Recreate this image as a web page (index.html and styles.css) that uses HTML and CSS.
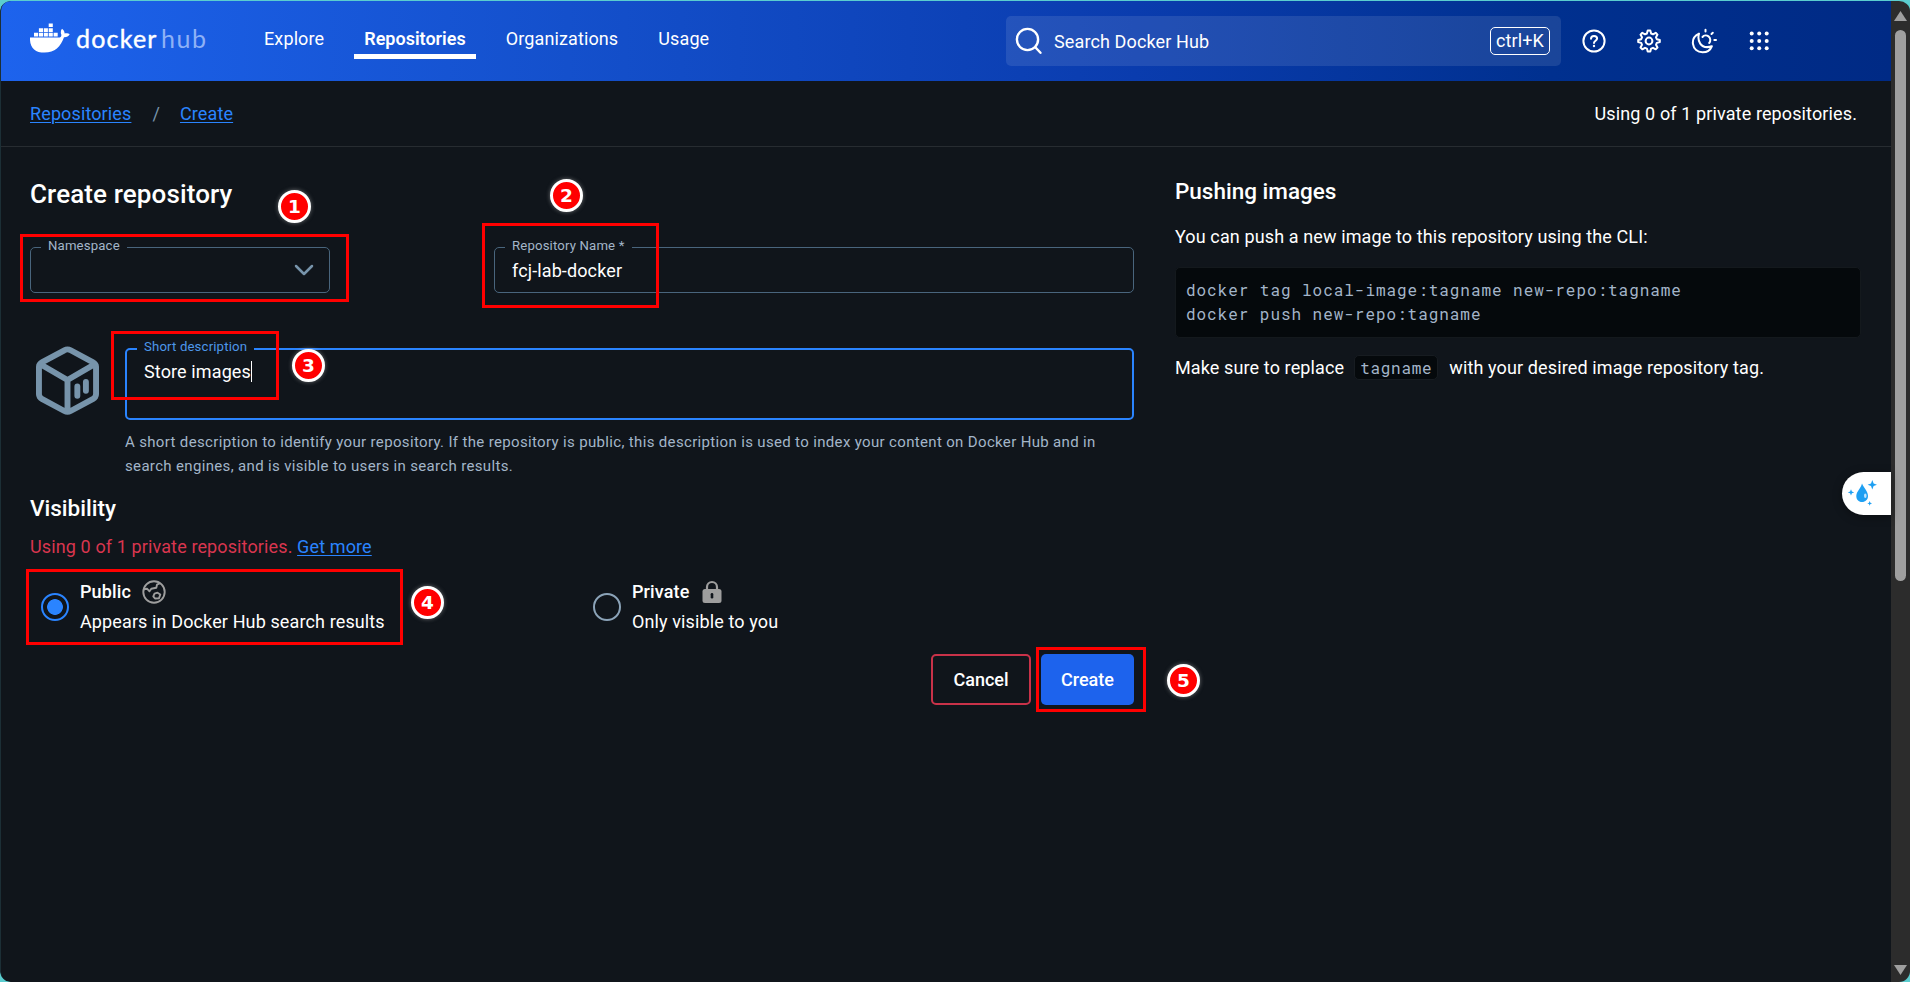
FILE: index.html
```html
<!DOCTYPE html>
<html lang="en">
<head>
<meta charset="utf-8">
<title>Create repository | Docker Hub</title>
<link rel="stylesheet" href="styles.css">
</head>
<body>
<div class="window">
  <div class="page">
    <header class="topbar">
      <div class="logo">
        <svg class="whale" viewBox="0 0 40 30" fill="#fff">
          <path d="M0 14.5H28.5C30.5 14.5 31.6 13.6 31.3 11.5C30.4 9.6 30.8 7.3 32 5.8C33.6 6.9 34.6 8.4 34.6 10.4C36.6 10 38.6 10.4 39.7 11.3C38.7 13.4 36.5 14.3 34 14.2C30.8 23.4 24.8 29.6 14.5 29.6C5 29.6-.5 24.5 0 14.5Z"/>
          <path d="M4 9.8h4.1v3.7H4zM8.9 9.8H13v3.7H8.9zM13.8 9.8h4.1v3.7h-4.1zM18.7 9.8h4.1v3.7h-4.1zM23.6 9.8h4.1v3.7h-4.1zM8.9 5.2H13v3.7H8.9zM13.8 5.2h4.1v3.7h-4.1zM18.7 5.2h4.1v3.7h-4.1zM18.7.4h4.1v3.7h-4.1z"/>
        </svg>
        <span class="logo-docker">docker</span><span class="logo-hub">hub</span>
      </div>
      <nav class="nav">
        <a class="nav-item">Explore</a>
        <a class="nav-item active">Repositories</a>
        <a class="nav-item">Organizations</a>
        <a class="nav-item">Usage</a>
      </nav>
      <div class="search">
        <svg class="search-icon" viewBox="0 0 28 28" fill="none" stroke="#fff" stroke-width="2.4" stroke-linecap="round"><circle cx="12.5" cy="12.5" r="10.6"/><path d="M20.3 20.3L25.5 25.8"/></svg>
        <span class="search-text">Search Docker Hub</span>
        <kbd class="kbd">ctrl+K</kbd>
      </div>
      <div class="tools">
        <svg viewBox="0 0 26 26" fill="none" stroke="#fff" stroke-width="2" stroke-linecap="round"><circle cx="13" cy="13" r="10.6"/><path d="M10 10.7C10 9 11.3 7.9 13 7.9S16.1 9 16.1 10.6C16.1 12.6 13 12.8 13 14.9"/><circle cx="13" cy="18" r=".5" stroke-width="1.4"/></svg>
        <svg viewBox="0 0 26 26" fill="none" stroke="#fff" stroke-width="2" stroke-linejoin="round"><circle cx="13" cy="13" r="3.4"/><path d="M11.7 2.5h2.6l.8 3 1.9.8 2.7-1.5 1.8 1.8-1.5 2.7.8 1.9 3 .8v2.1l-3 .8-.8 1.9 1.5 2.7-1.8 1.8-2.7-1.5-1.9.8-.8 3h-2.6l-.8-3-1.9-.8-2.7 1.5-1.8-1.8L6 16.8l-.8-1.9-3-.8V12l3-.8L6 9.3 4.5 6.6l1.8-1.8L9 6.3l1.9-.8z"/></svg>
        <svg viewBox="0 0 26 26" fill="none" stroke="#fff" stroke-width="2" stroke-linecap="round" stroke-linejoin="round"><path d="M8 5.6C3.8 7.600 1.3 11.500 2 16C2.7 21 6.5 24.200 11.5 24.200C16 24.200 19.5 21.700 20.8 18.300C16 19.800 11.5 19 9.200 15.600C7.200 12.500 7 9 8 5.600Z"/><path d="M11.5 9C13 7.300 15.600 7 17.500 8.400C19.600 10 19.900 13 18.200 15M14.500 1.800v1.700M21.800 4.700l-1.300 1.300M23.300 12h1.700"/></svg>
        <svg viewBox="0 0 26 26" fill="#fff"><circle cx="5.700" cy="5.600" r="2"/><circle cx="13.200" cy="5.600" r="2"/><circle cx="20.700" cy="5.600" r="2"/><circle cx="5.700" cy="13" r="2"/><circle cx="13.200" cy="13" r="2"/><circle cx="20.700" cy="13" r="2"/><circle cx="5.700" cy="20.300" r="2"/><circle cx="13.200" cy="20.300" r="2"/><circle cx="20.700" cy="20.300" r="2"/></svg>
      </div>
    </header>

    <div class="crumbs">
      <a class="link">Repositories</a><span class="slash">/</span><a class="link">Create</a>
      <span class="quota">Using 0 of 1 private repositories.</span>
    </div>

    <main class="content">
      <section class="form">
        <h1 class="title">Create repository</h1>
        <div class="row">
          <fieldset class="field namespace">
            <legend>Namespace</legend>
            <svg class="chevron" viewBox="0 0 20 12" fill="none" stroke="#7794ab" stroke-width="2.5" stroke-linecap="round" stroke-linejoin="round"><path d="M2 2l8 8 8-8"/></svg>
          </fieldset>
          <fieldset class="field reponame">
            <legend>Repository Name *</legend>
            <div class="value">fcj-lab-docker</div>
          </fieldset>
        </div>
        <div class="desc">
          <svg class="cube" viewBox="0 0 64 70" fill="none" stroke="#7794ab" stroke-width="6" stroke-linejoin="round"><path d="M28.8 4.3Q32 2.5 35.2 4.3L57.6 16.3Q61 18.2 61 21V49Q61 52 57.6 54L35.2 66Q32 67.7 28.8 66L6.4 54Q3 52 3 49V21Q3 18.2 6.4 16.3ZM4.5 18.5L32 34.5L59.5 18.5M32 34.5V66"/><path stroke-linecap="round" d="M42 41V50.5M50.7 36.5V45.5"/></svg>
          <div class="desc-body">
            <fieldset class="field focus">
              <legend>Short description</legend>
              <div class="value"><span>Store images</span><i class="caret"></i></div>
            </fieldset>
            <p class="helper">A short description to identify your repository. If the repository is public, this description is used to index your content on Docker Hub and in<br>search engines, and is visible to users in search results.</p>
          </div>
        </div>
        <h2 class="subtitle">Visibility</h2>
        <p class="limit">Using 0 of 1 private repositories. <a class="link">Get more</a></p>
        <div class="options">
          <div class="option">
            <i class="radio on"></i>
            <div>
              <div class="opt-name"><b>Public</b>
                <svg viewBox="0 0 24 24" fill="none" stroke="#9e9e9e" stroke-width="1.9" stroke-linejoin="round"><circle cx="12" cy="12" r="10.7"/><path d="M1.5 9.2L5 8.7L7.5 11.3L9.3 8.7L14.3 7.7L15 4.7L18 3.2M12.5 13.7L15.5 12.7L18.3 14.5L17 18.2L13 18.5L11.3 16.3Z"/></svg>
              </div>
              <div class="opt-text">Appears in Docker Hub search results</div>
            </div>
          </div>
          <div class="option">
            <i class="radio"></i>
            <div>
              <div class="opt-name"><b>Private</b>
                <svg viewBox="0 0 24 24"><path d="M7 10V7a5 5 0 0 1 10 0v3" fill="none" stroke="#9e9e9e" stroke-width="2.2"/><rect x="2.5" y="9" width="19" height="14" rx="2.5" fill="#9e9e9e"/><path d="M12 14.3v3" stroke="#10151b" stroke-width="2.6" stroke-linecap="round"/></svg>
              </div>
              <div class="opt-text">Only visible to you</div>
            </div>
          </div>
        </div>
        <div class="actions">
          <button class="btn cancel">Cancel</button>
          <button class="btn create">Create</button>
        </div>
      </section>
      <aside class="aside">
        <h2 class="aside-title">Pushing images</h2>
        <p class="aside-text">You can push a new image to this repository using the CLI:</p>
        <pre class="code">docker tag local-image:tagname new-repo:tagname
docker push new-repo:tagname</pre>
        <p class="aside-text note"><span>Make sure to replace</span><code>tagname</code><span>with your desired image repository tag.</span></p>
      </aside>
    </main>
  </div>
  <div class="scrollbar"><i class="arrow up"></i><i class="thumb"></i><i class="arrow down"></i></div>

  <div class="assistant">
    <svg viewBox="0 0 36 36" fill="#1e9ff2"><path d="M15 7.5C17 12 21 15.5 21 20C21 23.6 18.4 26 15 26S9.3 23.6 9.3 20C9.3 15.5 13.8 12.5 15 7.5Z"/><ellipse cx="18.3" cy="19.7" rx="1.3" ry="2.2" fill="#bfe4ff"/><path d="M25.3 4l1.3 3.4L30 8.7l-3.4 1.3-1.3 3.4L24 10l-3.4-1.3L24 7.4zM4 13.2l.9 2.3 2.3.9-2.3.9-.9 2.3-.9-2.3-2.3-.9 2.3-.9zM22.7 25l.7 1.7 1.7.7-1.7.7-.7 1.7-.7-1.7-1.7-.7 1.700-.7z"/></svg>
  </div>

  <i class="mark m1"></i><i class="mark m2"></i><i class="mark m3"></i><i class="mark m4"></i><i class="mark m5"></i>
  <b class="step s1">1</b><b class="step s2">2</b><b class="step s3">3</b><b class="step s4">4</b><b class="step s5">5</b>
</div>
</body>
</html>
```

FILE: styles.css
```css
* { box-sizing: border-box; }
body {
  margin: 0;
  background: #5bcdcf;
  font-family: Roboto, "Open Sans", sans-serif;
  font-size: 18px;
  letter-spacing: .12px;
  color: #fff;
}
h1, h2, p, pre, fieldset { margin: 0; }
.window {
  position: relative;
  display: flex;
  width: 1910px;
  height: 982px;
  overflow: hidden;
  border-top: 1px solid #5bcdcf;
  border-radius: 11px;
}
.page {
  flex: 1;
  background: #10151b;
  border-left: 1px solid #1c2f36;
  border-radius: 10px 0 0 10px;
  overflow: hidden;
}

/* Top bar */
.topbar {
  display: flex;
  height: 80px;
  padding-left: 29px;
  background: linear-gradient(90deg, #1d63ed 0%, #1450cc 30%, #0a3cae 60%, #00308f 82%, #002a85 100%);
}
.logo { display: flex; width: 204px; padding-top: 22px; }
.whale { width: 40px; height: 30px; }
.logo-docker, .logo-hub {
  font-family: Lato, sans-serif;
  font-size: 25px;
  line-height: 30px;
}
.logo-docker { margin-left: 6px; width: 85px; letter-spacing: 1.2px; -webkit-text-stroke: .4px #fff; }
.logo-hub { color: #8eb1f6; letter-spacing: 1.6px; }
.nav { display: flex; padding-top: 24px; }
.nav-item { height: 34px; padding: 0 10px; margin-left: 20px; line-height: 28px; }
.nav-item.active { font-weight: 600; letter-spacing: 0; border-bottom: 5px solid #fff; }
.search {
  display: flex;
  align-items: center;
  width: 555px;
  height: 50px;
  margin: 15px 0 0 auto;
  padding: 0 11px 0 9px;
  border-radius: 5px;
  background: rgba(255, 255, 255, .1);
}
.search-icon { width: 28px; height: 28px; }
.search-text { margin-left: 11px; }
.kbd {
  margin-left: auto;
  width: 60px;
  height: 28px;
  border: 1px solid #fff;
  border-radius: 5px;
  font: 18px/26px Roboto, sans-serif;
  text-align: center;
}
.tools { display: flex; gap: 29px; padding: 27px 119px 0 20px; }
.tools svg { width: 26px; height: 26px; }

/* Breadcrumbs */
.crumbs {
  display: flex;
  height: 66px;
  padding: 0 34px 0 29px;
  border-bottom: 1px solid #272c31;
  line-height: 65px;
}
.link { color: #2a84ff; text-decoration: underline; text-underline-offset: 2px; text-decoration-thickness: 1px; }
.slash { margin: 0 20px 0 21px; color: #7794ab; }
.quota { margin-left: auto; }

/* Form column */
.content { display: flex; }
.form { width: 1133px; padding: 30px 0 0 29px; }
.title { height: 64px; font-size: 26px; line-height: 34px; font-weight: 500; }
.row { display: flex; gap: 164px; }
.field {
  min-width: 0;
  height: 52px;
  padding: 0 17px 0 10px;
  border: 1px solid #49657d;
  border-radius: 5px;
}
.field legend {
  height: 12px;
  padding: 0 7px;
  font-size: 13.2px;
  line-height: 9px;
  color: #a3b5c9;
  letter-spacing: .15px;
}
.namespace { width: 300px; display: flex; padding-right: 15px; }
.namespace .chevron { display: block; width: 20px; height: 12px; margin: 11px 0 0 auto; }
.reponame { width: 640px; }
.value { display: flex; padding: 0 7px; line-height: 22px; margin-top: 7px; }
.desc { display: flex; margin-top: 50px; }
.cube { width: 63px; height: 69px; margin: 3px 26px 0 6px; }
.desc-body { width: 1009px; }
.field.focus { height: 77px; border: 2px solid #2a84ff; }
.field.focus legend { color: #4d97ea; line-height: 7px; }
.focus .value { margin-top: 6px; }
.caret { width: 1px; height: 21px; background: #fff; }
.helper { margin-top: 10px; font-size: 15px; line-height: 24px; color: #a3b5c9; letter-spacing: .34px; white-space: nowrap; }
.subtitle { margin-top: 13px; font-size: 22.5px; line-height: 34px; font-weight: 500; letter-spacing: 0; }
.limit { margin-top: 10px; line-height: 24px; color: #d9364f; }
.options { display: flex; margin-top: 21px; }
.option { display: flex; width: 552px; padding-left: 11px; gap: 11px; }
.radio {
  width: 28px;
  height: 28px;
  margin-top: 13px;
  border: 2px solid #8ba3b8;
  border-radius: 50%;
}
.radio.on { border-color: #2a84ff; background: radial-gradient(circle, #2a84ff 7.5px, transparent 8.2px); }
.opt-name { display: flex; gap: 11px; height: 30px; line-height: 24px; }
.opt-name b { font-weight: 500; }
.opt-name svg { width: 24px; height: 24px; }
.opt-text { line-height: 24px; }
.actions { display: flex; justify-content: flex-end; gap: 10px; margin-top: 20px; }
.btn {
  height: 51px;
  border: 0;
  padding: 0;
  border-radius: 5px;
  color: #fff;
  background: #1d63ed;
  font: 500 18px Roboto, sans-serif;
}
.btn.cancel { width: 100px; border: 2px solid #c93249; background: none; }
.btn.create { width: 93px; }

/* Side column */
.aside { flex: 1; padding: 27px 30px 0 41px; }
.aside-title { font-size: 22.5px; line-height: 34px; font-weight: 500; letter-spacing: 0; }
.aside-text { margin-top: 17px; line-height: 24px; }
.code {
  height: 71px;
  margin-top: 18px;
  padding: 10px;
  border: 1px solid #14191d;
  border-radius: 5px;
  background: #05090c;
  color: #a3b5c9;
  font: 16px/24px "Roboto Mono", "DejaVu Sans Mono", monospace;
  letter-spacing: .95px;
}
.note { display: flex; margin-top: 18px; }
.note code {
  height: 25px;
  margin: -1px 11px 0 10px;
  padding: 0 5px;
  border: 1px solid #171c21;
  border-radius: 5px;
  background: #05090c;
  color: #a3b5c9;
  font: 16px/23px "Roboto Mono", "DejaVu Sans Mono", monospace;
  letter-spacing: .7px;
}

/* Browser scrollbar */
.scrollbar { display: flex; flex-direction: column; align-items: center; width: 19px; background: #2c2c2c; }
.arrow { width: 13px; height: 10px; background: #9f9f9f; }
.arrow.up { margin-top: 10px; clip-path: polygon(50% 0, 100% 100%, 0 100%); }
.arrow.down { margin: auto 0 7px; clip-path: polygon(0 0, 100% 0, 50% 100%); }
.thumb { width: 11px; height: 551px; margin-top: 9px; border-radius: 6px; background: #9f9f9f; }

/* Floating assistant tab */
.assistant {
  position: absolute;
  left: 1842px;
  top: 471px;
  width: 49px;
  height: 43px;
  padding: 4px 0 0 5px;
  border-radius: 22px 0 0 22px;
  background: #fff;
  box-shadow: 0 2px 10px rgba(0, 0, 0, .35);
}
.assistant svg { width: 36px; height: 36px; }

/* Tutorial annotations */
.mark { position: absolute; border: 3px solid #f00; }
.m1 { left: 20px; top: 233px; width: 329px; height: 68px; }
.m2 { left: 482px; top: 222px; width: 177px; height: 85px; }
.m3 { left: 111px; top: 330px; width: 168px; height: 69px; }
.m4 { left: 26px; top: 568px; width: 377px; height: 76px; }
.m5 { left: 1036px; top: 646px; width: 110px; height: 65px; }
.step {
  position: absolute;
  width: 33px;
  height: 33px;
  border: 3px solid #fff;
  border-radius: 50%;
  background: #f00;
  box-shadow: 0 0 4px rgba(200, 200, 200, .5);
  font: bold 18.5px/27px "DejaVu Sans", sans-serif;
  letter-spacing: 0;
  text-align: center;
}
.s1 { left: 278px; top: 189px; }
.s2 { left: 550px; top: 178px; }
.s3 { left: 292px; top: 348px; }
.s4 { left: 411px; top: 585px; }
.s5 { left: 1167px; top: 663px; }
```
